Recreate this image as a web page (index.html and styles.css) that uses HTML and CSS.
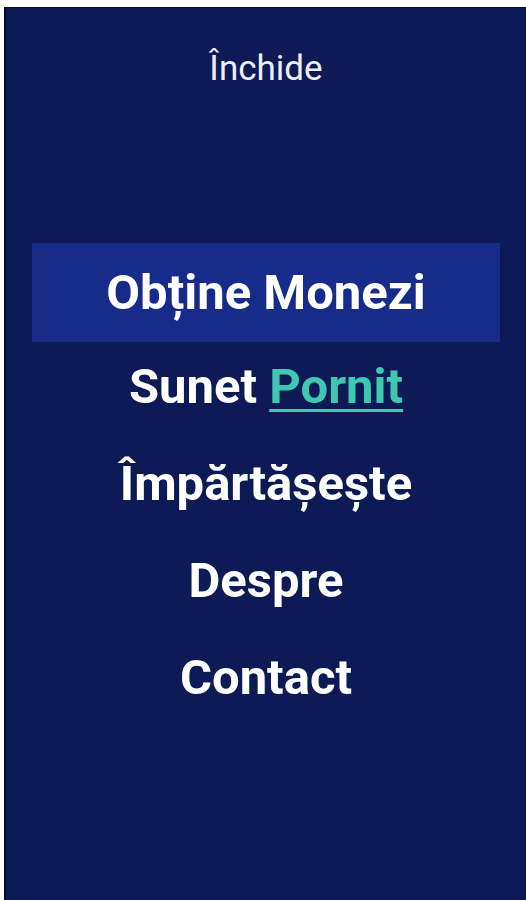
FILE: index.html
```html
<!DOCTYPE html>
<html lang="ro">
<head>
<meta charset="utf-8">
<title>Meniu</title>
<link rel="stylesheet" href="styles.css">
</head>
<body>
<nav class="panel">
  <a class="close" href="#">Închide</a>
  <ul class="menu">
    <li class="item active"><a href="#">Obține Monezi</a></li>
    <li class="item"><a href="#">Sunet <span class="on">Pornit</span></a></li>
    <li class="item"><a href="#">Împărtășește</a></li>
    <li class="item"><a href="#">Despre</a></li>
    <li class="item"><a href="#">Contact</a></li>
  </ul>
</nav>
</body>
</html>
```
FILE: styles.css
```css
html, body {
  margin: 0;
  padding: 0;
  background: #ffffff;
}
body {
  padding: 7px 0 0 4px;
  height: 900px;
  box-sizing: border-box;
  overflow: hidden;
}
.panel {
  height: 893px;
  background: #0d1a55;
  border-top: 1px solid #060c33;
  border-left: 2px solid #050a2e;
  box-sizing: border-box;
  display: flex;
  flex-direction: column;
  align-items: stretch;
}
.close {
  display: block;
  margin-top: 40px;
  height: 42px;
  line-height: 42px;
  text-align: center;
  color: #eceef6;
  font-family: Roboto, "Noto Sans", sans-serif;
  font-size: 35px;
  text-decoration: none;
}
.menu {
  list-style: none;
  margin: 153px 0 0 0;
  padding: 0 26px;
  display: flex;
  flex-direction: column;
}
.item {
  height: 97px;
  display: flex;
  align-items: center;
  justify-content: center;
}
.item.active {
  height: 99px;
  margin-bottom: -4px;
  background: #172b8b;
}
.item a {
  color: #ffffff;
  text-decoration: none;
  font-family: Roboto, "Noto Sans", sans-serif;
  font-weight: 700;
  font-size: 49px;
  line-height: 1;
}
.on {
  color: #3ec8b2;
  text-decoration: underline;
  text-decoration-thickness: 3px;
  text-underline-offset: 6px;
}
```
